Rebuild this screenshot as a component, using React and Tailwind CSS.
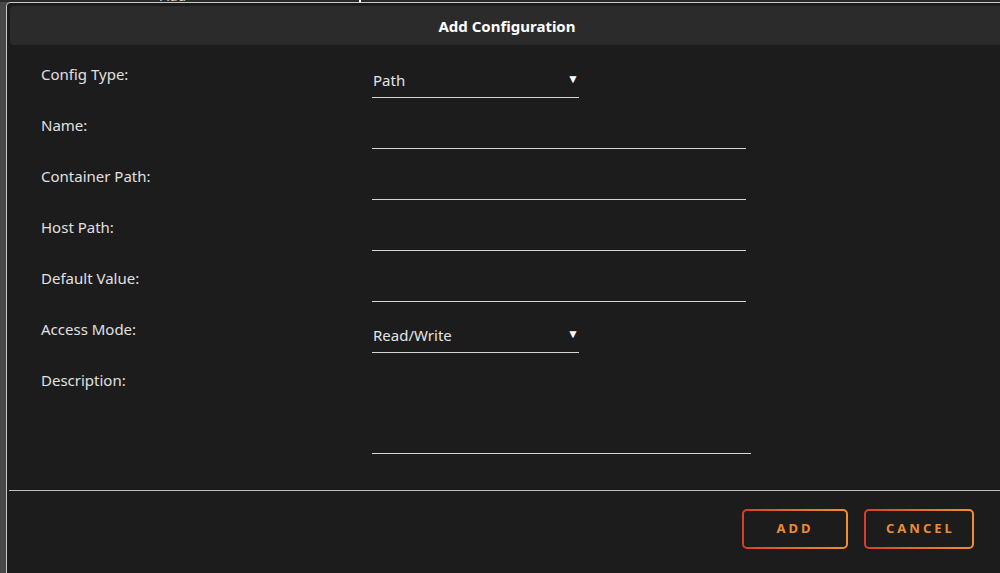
import { useState } from "react";

const font = { fontFamily: '"Noto Sans", "Open Sans", sans-serif' };

function Select({ value, options, onChange }) {
    return (
        <div className="relative w-[207px] h-[35px] border-b border-[#d6d6d6]">
            <select
                value={value}
                onChange={(e) => onChange(e.target.value)}
                className="appearance-none w-full h-full bg-transparent text-[15px] text-[#e4e4e4] pl-[1px] pr-6 outline-none"
            >
                {options.map((o) => (
                    <option key={o} value={o} className="bg-[#1c1c1c]">
                        {o}
                    </option>
                ))}
            </select>
            <span className="pointer-events-none absolute right-0 top-[9px] text-[12px] leading-[14px] text-white">
                ▼
            </span>
        </div>
    );
}

function TextField({ name, value, onChange, width = "w-[374px]" }) {
    return (
        <input
            type="text"
            name={name}
            value={value}
            onChange={onChange}
            className={`${width} h-[35px] bg-transparent border-b border-[#d6d6d6] text-[15px] text-[#e4e4e4] px-[1px] outline-none`}
        />
    );
}

function GradientButton({ children }) {
    return (
        <button className="rounded-[5px] p-[2px] bg-gradient-to-r from-[#d83d2b] to-[#f0902f]">
            <span className="flex items-center justify-center h-[36px] rounded-[3px] bg-[#1c1c1c] px-[20px] text-[13px] font-bold tracking-[3px] text-[#ec8b33]">
                {children}
            </span>
        </button>
    );
}

export default function App() {
    const [form, setForm] = useState({
        type: "Path",
        name: "",
        container: "",
        host: "",
        def: "",
        mode: "Read/Write",
        description: ""
    });

    function handleChange(e) {
        setForm({ ...form, [e.target.name]: e.target.value });
    }

    const rows = [
        { label: "Config Type:", field: <Select value={form.type} options={["Path", "Port", "Variable", "Label", "Device"]} onChange={(v) => setForm({ ...form, type: v })} /> },
        { label: "Name:", field: <TextField name="name" value={form.name} onChange={handleChange} /> },
        { label: "Container Path:", field: <TextField name="container" value={form.container} onChange={handleChange} /> },
        { label: "Host Path:", field: <TextField name="host" value={form.host} onChange={handleChange} /> },
        { label: "Default Value:", field: <TextField name="def" value={form.def} onChange={handleChange} /> },
        { label: "Access Mode:", field: <Select value={form.mode} options={["Read/Write", "Read Only"]} onChange={(v) => setForm({ ...form, mode: v })} /> }
    ];

    return (
        <div className="w-[1000px] h-[573px] overflow-hidden bg-[#474747]" style={font}>
            {/* sliver of the page behind the dialog */}
            <div className="h-[2px] overflow-hidden bg-[#2a2a2a] relative">
                <span className="absolute left-[160px] -top-[12px] text-[14px] leading-[16px] text-[#cfcfcf]">Add</span>
                <span className="absolute left-[359px] top-0 w-[2px] h-[2px] bg-white" />
            </div>

            <div className="ml-[6px] w-[1002px] h-[600px] border border-[#c8c8c8] rounded-tl-[4px] bg-[#1c1c1c] p-[3px]">
                <div className="h-[39px] rounded-[4px] bg-[#2b2b2b] flex items-center justify-center pt-[2px]">
                    <h1 className="text-[15px] font-bold text-white">Add Configuration</h1>
                </div>

                <div className="pl-[31px] pt-[18px]">
                    {rows.map((r) => (
                        <div key={r.label} className="grid grid-cols-[331px_1fr] h-[51px]">
                            <label className="text-[15px] leading-[22px] text-[#e0e0e0]">{r.label}</label>
                            <div>{r.field}</div>
                        </div>
                    ))}
                    <div className="grid grid-cols-[331px_1fr]">
                        <label className="text-[15px] leading-[22px] text-[#e0e0e0]">Description:</label>
                        <textarea
                            name="description"
                            value={form.description}
                            onChange={handleChange}
                            className="w-[379px] h-[85px] resize-none bg-transparent border-b border-[#d6d6d6] text-[15px] text-[#e4e4e4] px-[1px] outline-none"
                        />
                    </div>
                </div>

                <div className="mt-[36px] -ml-[1px] h-[1px] bg-[#bdbdbd]" />

                <div className="flex justify-end gap-[16px] pr-[30px] pt-[18px]">
                    <GradientButton>
                        <span className="w-[62px] text-center">ADD</span>
                    </GradientButton>
                    <GradientButton>
                        <span className="w-[66px] text-center">CANCEL</span>
                    </GradientButton>
                </div>
            </div>
        </div>
    );
}
